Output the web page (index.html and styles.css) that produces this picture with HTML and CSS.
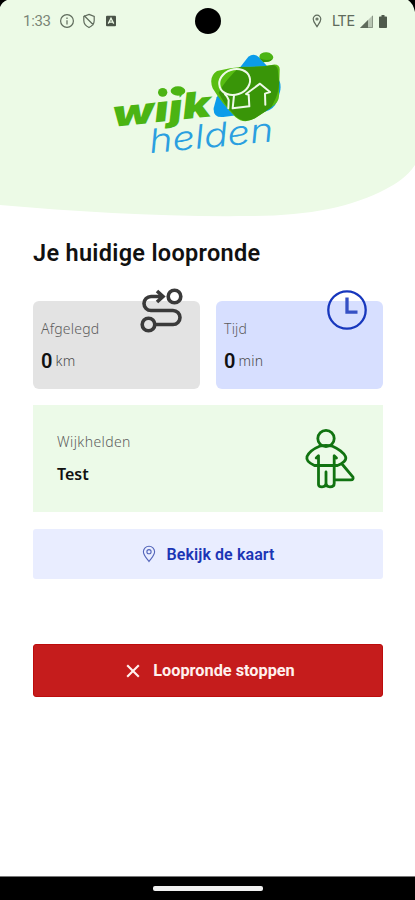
FILE: index.html
```html
<!DOCTYPE html>
<html lang="nl">
<head>
<meta charset="utf-8">
<meta name="viewport" content="width=device-width">
<title>Wijkhelden</title>
<link rel="stylesheet" href="styles.css">
</head>
<body>
<div class="phone">
  <header class="hero">
    <svg class="hero-bg" viewBox="0 0 415 220" aria-hidden="true">
      <path fill="#ecfae6" d="M0 0H415V165C407 177 397 183 386 189C352 207 308 216 250 216C165 217 80 212 0 205Z"/>
      <path d="M0 0H7Q2 2 0 7ZM415 0H408Q413 3 415 12Z"/>
    </svg>
    <div class="status">
      <div class="status-left">
        <span class="time">1:33</span>
        <svg class="s-info" viewBox="0 0 16 16"><circle cx="8" cy="8" r="6.4"/><path d="M8 7.2V11.4M8 4.6V5.9"/></svg>
        <svg class="s-shield" viewBox="0 0 14 16"><path d="M7 1.4L12.2 3.4V7.6C12.2 10.8 10 13.2 7 14.5C4 13.2 1.8 10.8 1.8 7.6V3.4ZM2 2.5L11.5 12"/></svg>
        <svg class="s-app" viewBox="0 0 10 12"><rect y=".8" width="10" height="10.4" rx="1"/><path d="M2.3 8.6L5 3.2L7.7 8.6M3.4 7.2H6.6"/></svg>
      </div>
      <span class="camera"></span>
      <div class="status-right">
        <svg class="s-pin" viewBox="0 0 10 14"><path d="M5 1.2A3.8 3.8 0 0 1 8.8 5C8.8 7.8 6.4 10.2 5 12.6C3.6 10.2 1.2 7.8 1.2 5A3.8 3.8 0 0 1 5 1.2Z"/><circle cx="5" cy="5" r="1"/></svg>
        <span class="lte">LTE</span>
        <svg class="s-signal" viewBox="0 0 13 13"><path class="weak" d="M0 13L13 0V13Z"/><path d="M0 13L8 5V13Z"/><path d="M8 12.5H12.5V1"/></svg>
        <svg class="s-battery" viewBox="0 0 8 13"><path d="M2.5 0H5.5V1.4H7.2Q8 1.4 8 2.2V12.2Q8 13 7.2 13H.8Q0 13 0 12.2V2.2Q0 1.4 .8 1.4H2.5Z"/></svg>
      </div>
    </div>
    <svg class="logo" viewBox="0 0 600 390" role="img" aria-label="wijk helden">
      <clipPath id="stems"><path d="M-30 -70H112V-61H206V-120H340V50H-30Z"/></clipPath>
      <path fill="#0b9cea" d="M445 50Q462 38 477 52L532 112Q546 130 540 155L532 182Q522 208 495 215L370 231Q339 234 341 204L350 172Z"/>
      <ellipse fill="#4bb413" cx="499" cy="51" rx="21" ry="14" transform="rotate(5 499 51)"/>
      <path fill="#58bd12" d="M351 93Q390 82 430 80Q480 82 519 74Q541 72 539 92L537 160Q540 186 514 202L465 235Q432 254 406 231Q365 190 338 145Q325 110 351 93Z"/>
      <path fill="#399508" d="M419 81Q480 82 519 75Q534 77 534 95L537 124Q538 150 526 178L514 202L495 215L465 235Q432 252 406 228Q370 190 356 158Q376 120 419 81Z"/>
      <path fill="#399508" d="M479 55Q500 65 517 56Q512 64 504 65L490 67Z"/>
      <g fill="none" stroke="#eef9e8" stroke-width="6" stroke-linecap="round" stroke-linejoin="round">
        <ellipse cx="404" cy="126" rx="47" ry="38" transform="rotate(-18 404 126)"/>
        <path d="M385 205L386 180Q383 170 375 163M402 166L398 205L448 199L446 164L438 162L480 131L510 156L495 161L496 194"/>
      </g>
      <g transform="translate(41 260) rotate(-6)">
        <g clip-path="url(#stems)">
          <text class="logo-bold" x="0" y="0" textLength="298" lengthAdjust="spacingAndGlyphs">wijk</text>
        </g>
      </g>
      <ellipse fill="#4bb413" cx="188" cy="157" rx="14" ry="13"/>
      <ellipse fill="#4bb413" cx="234" cy="153" rx="22" ry="14"/>
      <g transform="translate(151 340) rotate(-5.6)">
        <text class="logo-light" x="0" y="0" textLength="373" lengthAdjust="spacingAndGlyphs">helden</text>
      </g>
    </svg>
  </header>

  <main class="content">
    <h1>Je huidige loopronde</h1>
    <section class="stats">
      <article class="stat stat-grey">
        <span class="label">Afgelegd</span>
        <p class="value"><b>0</b> km</p>
        <svg class="stat-icon route" viewBox="0 0 44 46"><circle cx="35.5" cy="8.5" r="6.3"/><circle cx="9.5" cy="36.5" r="6.3"/><path d="M16 36.5H34A7 7 0 0 0 34 22.5H12A7 7 0 0 1 12 8.5H23M18 3L24 8.5L18 14"/></svg>
      </article>
      <article class="stat stat-blue">
        <span class="label">Tijd</span>
        <p class="value"><b>0</b> min</p>
        <svg class="stat-icon clock" viewBox="0 0 40 40"><circle cx="20" cy="20" r="18.7"/><path d="M20 7.5V22.2H30.5"/></svg>
      </article>
    </section>
    <section class="heroes">
      <div>
        <span class="label wide">Wijkhelden</span>
        <strong>Test</strong>
      </div>
      <svg class="hero-icon" viewBox="0 0 50 60"><circle cx="21" cy="9.5" r="8.2"/><path d="M14.5 17.2C9 19.5 3.5 24 2 27.5C1 31 5 34.5 9.5 36.5H13.5M29.2 36.5H32.5C38 34.5 42 31 40.5 27.5C39 24 33 19.5 27.5 17.2Q21 15.6 14.5 17.2M13.5 36.5H29.2M13.5 27V55.5Q13.5 57.8 17 57.8Q21 57.8 21 54V43M21 54Q21 57.8 25 57.8Q29.2 57.8 29.2 54.5V27M11.2 29L13.5 26.7M31.5 29L29.2 26.7M37 35L48 48.2Q48.7 50.8 46 50.8H29.2"/></svg>
    </section>
    <button class="btn btn-map">
      <svg class="map-pin" viewBox="0 0 14 18"><path d="M7 1.2A5.6 5.6 0 0 1 12.6 6.8C12.6 10.4 9 13.4 7 16.5C5 13.4 1.4 10.4 1.4 6.8A5.6 5.6 0 0 1 7 1.2Z"/><circle cx="7" cy="6.7" r="2.1"/></svg>
      <span>Bekijk de kaart</span>
    </button>
    <button class="btn btn-stop">
      <svg class="cross" viewBox="0 0 14 14"><path d="M1.2 1.2L12.8 12.8M12.8 1.2L1.2 12.8"/></svg>
      <span>Loopronde stoppen</span>
    </button>
  </main>
  <footer class="navbar"><span></span></footer>
</div>
</body>
</html>
```
FILE: styles.css
```css
* { box-sizing: border-box; }
body { margin: 0; background: #fff; font-family: "Noto Sans", sans-serif; color: #111; }
svg { display: block; flex: none; overflow: visible; }
h1, p { margin: 0; }

.phone { width: 415px; height: 900px; display: flex; flex-direction: column; overflow: hidden; }

.hero { position: relative; height: 220px; flex: none; }
.hero-bg { position: absolute; inset: 0; width: 415px; height: 220px; }
.status {
  position: relative; height: 42px; padding: 0 27px 0 23px;
  display: grid; grid-template-columns: 1fr 26px 1fr; align-items: center;
  font-family: Roboto, sans-serif; color: #5f6b5c;
}
.status-left, .status-right { display: flex; align-items: center; }
.status-right { justify-content: flex-end; }
.time { width: 28px; font-size: 15px; letter-spacing: -.3px; color: #7a8576; }
.camera { width: 26px; height: 26px; border-radius: 50%; background: #000; margin-left: 2px; }
.status svg { fill: none; stroke: #5f6b5c; stroke-width: 1.2; }
.s-info { width: 16px; height: 16px; margin-left: 8px; }
.s-shield { width: 14px; height: 16px; margin-left: 7px; }
.status .s-app { width: 10px; height: 12px; margin-left: 10px; fill: #4a5448; stroke: none; }
.s-app path { stroke: #ecfae6; stroke-width: 1.3; }
.s-pin { width: 10px; height: 14px; margin-right: 10px; }
.lte { font-size: 14.5px; width: 24px; margin-right: 4px; }
.status .s-signal { width: 13px; height: 13px; margin-right: 6px; fill: #5f6b5c; stroke: none; }
.s-signal .weak { fill: #b9c6b4; }
.s-signal path:last-child { fill: none; stroke: #8b9787; stroke-width: 1; }
.status .s-battery { width: 8px; height: 13px; fill: #4f5a4c; stroke: none; margin-right: 1px; }

.logo { position: relative; width: 200px; height: 130px; margin: -2px 0 0 100px; }
.logo-bold { font: italic 900 108px Inter, sans-serif; fill: #4bb413; }
.logo-light { font: italic 300 100px Inter, sans-serif; fill: #2a9fe0; }

.content { flex: 1; padding: 17px 32px 0 33px; display: flex; flex-direction: column; }
h1 { font-family: Roboto, sans-serif; font-size: 23.5px; letter-spacing: .3px; line-height: 32px; font-weight: 600; white-space: nowrap; }
.label { display: block; color: #5d5d5d; font-size: 14px; line-height: 20px; font-weight: 300; letter-spacing: .2px; }
.label.wide { letter-spacing: .4px; }
.stats { display: grid; grid-template-columns: 167px 167px; gap: 16px; margin-top: 32px; }
.stat { position: relative; height: 88px; border-radius: 6px; padding: 18px 8px; }
.stat-grey { background: #e3e3e3; }
.stat-blue { background: #d7dfff; }
.value { margin-top: 10px; font-size: 14px; line-height: 24px; font-weight: 300; color: #4b4b4b; display: flex; align-items: center; gap: 3px; letter-spacing: .3px; }
.value b { font-family: Roboto, sans-serif; font-size: 20px; font-weight: 600; color: #111; letter-spacing: 0; }
.stat-icon { position: absolute; fill: none; stroke-width: 3.6; }
.route { width: 44px; height: 46px; left: 106px; top: -13px; stroke: #3a3a3a; }
.clock { width: 40px; height: 40px; left: 111px; top: -11px; stroke: #1737bd; stroke-width: 2.3; }
.clock path { stroke: #3550c4; stroke-width: 3.3; }

.heroes {
  display: flex; justify-content: space-between; align-items: center;
  height: 107px; margin-top: 16px; padding: 0 28px 0 24px; background: #ecfae8;
}
.heroes strong { display: block; margin-top: 11px; font-size: 16px; line-height: 22px; font-weight: 600; }
.hero-icon { width: 50px; height: 60px; fill: none; stroke: #117311; stroke-width: 2.8; stroke-linejoin: round; stroke-linecap: round; }

.btn {
  display: flex; align-items: center; justify-content: center; border: 0; width: 350px;
  font-family: Roboto, sans-serif; font-size: 16.3px; font-weight: 700; white-space: nowrap; padding: 0;
}
.btn-map { height: 50px; margin-top: 17px; padding-left: 1px; gap: 10px; border-radius: 3px; background: #e9edff; color: #1b35b5; font-size: 16px; letter-spacing: .1px; font-weight: 600; }
.map-pin { width: 14px; height: 18px; fill: none; stroke: #5365ba; stroke-width: 1.1; }
.btn-stop { height: 53px; margin-top: 65px; padding-left: 5px; gap: 13px; border-radius: 3px; background: #c51c1c; border: 1px solid #bc0c0c; color: #fff1ee; }
.cross { width: 14px; height: 14px; fill: none; stroke: #fff1ee; stroke-width: 2.1; }

.navbar { height: 24px; flex: none; background: #000; border-top: 1px solid #777; display: flex; justify-content: center; padding-top: 9px; }
.navbar span { width: 110px; height: 5px; border-radius: 2px; background: #f1f1f1; }
```
